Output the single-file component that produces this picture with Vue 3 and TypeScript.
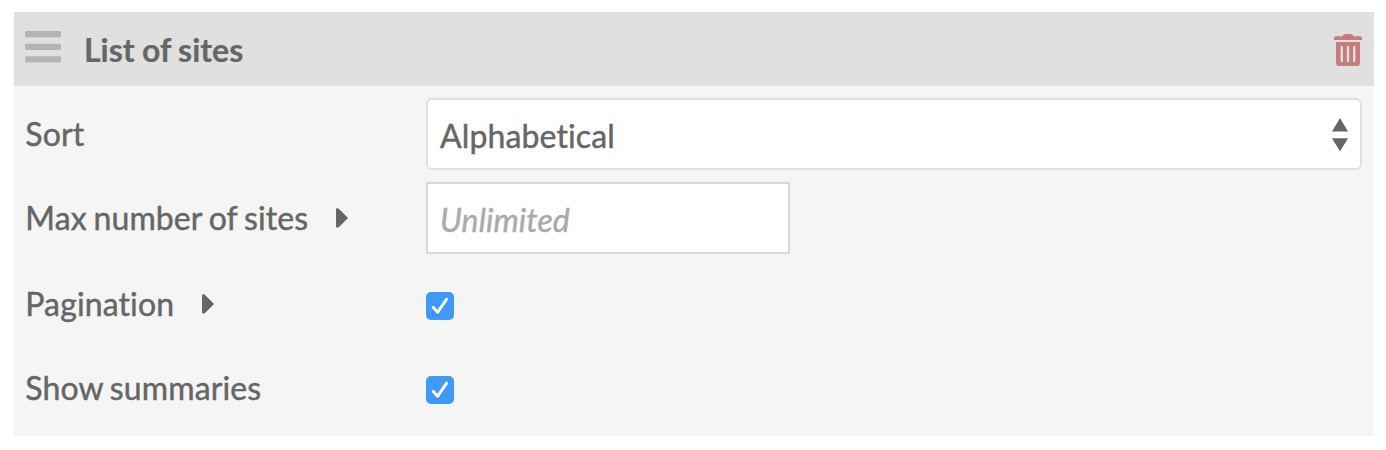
<script setup lang="ts">
import { ref } from 'vue'

interface Row {
  label: string
  kind: 'select' | 'input' | 'checkbox'
  expandable?: boolean
}

const rows: Row[] = [
  { label: 'Sort', kind: 'select' },
  { label: 'Max number of sites', kind: 'input', expandable: true },
  { label: 'Pagination', kind: 'checkbox', expandable: true },
  { label: 'Show summaries', kind: 'checkbox' },
]
const sort = ref('Alphabetical')
const placeholder = 'Unlimited'
</script>

<template>
  <section class="panel">
    <header class="header">
      <svg class="handle" width="36" height="32" viewBox="0 0 36 32">
        <rect width="36" height="6.2" rx="1.3" />
        <rect y="12.7" width="36" height="6.2" rx="1.3" />
        <rect y="25.2" width="36" height="6.2" rx="1.3" />
      </svg>
      <h2 class="title">List of sites</h2>
      <svg class="trash" width="30" height="34" viewBox="0 0 30 34">
        <path
          fill-rule="evenodd"
          d="M1 4.2Q1 2.2 3 2.2H9.5Q10.5 0 12.5 0H17.5Q19.5 0 20.5 2.2H27Q29 2.2 29 4.2V6H1ZM3 8H27V29Q27 32 24 32H6Q3 32 3 29ZM8.8 12Q7.6 12 7.6 13V27Q7.6 28 8.8 28Q10 28 10 27V13Q10 12 8.8 12ZM15 12Q13.8 12 13.8 13V27Q13.8 28 15 28Q16.2 28 16.2 27V13Q16.2 12 15 12ZM21.2 12Q20 12 20 13V27Q20 28 21.2 28Q22.4 28 22.4 27V13Q22.4 12 21.2 12Z"
        />
      </svg>
    </header>

    <div class="rows">
      <div v-for="row in rows" :key="row.label" class="row" :class="row.kind">
        <div class="label">
          <span>{{ row.label }}</span>
          <svg v-if="row.expandable" class="arrow" width="13" height="20" viewBox="0 0 13 20">
            <path d="M0 1.5Q0 0 1.4 .2Q2.3 .3 3 1L11.6 9.4Q12.2 10 11.6 10.6L3 19Q2 19.9 1 19.6Q0 19.3 0 18.5Z" />
          </svg>
        </div>
        <div v-if="row.kind === 'select'" class="field select-box">
          <span>{{ sort }}</span>
          <svg class="updown" width="16" height="34" viewBox="0 0 16 34">
            <path d="M8 0L16 13.5H0ZM0 20.2H16L8 33.5Z" />
          </svg>
        </div>
        <div v-else-if="row.kind === 'input'" class="field input-box">
          <span>{{ placeholder }}</span>
        </div>
        <svg v-else class="check" width="28" height="28" viewBox="0 0 28 28">
          <rect width="28" height="28" rx="5" fill="#3f99f8" />
          <path d="M7.5 16.5L11.8 21.8L20.8 8.4" fill="none" stroke="#2878cf" stroke-opacity=".4" stroke-width="3" stroke-linecap="round" />
          <path d="M7.3 15.5L11.6 20.3L20.5 7.4" fill="none" stroke="#fff" stroke-width="3.1" stroke-linecap="round" stroke-linejoin="round" />
        </svg>
      </div>
    </div>
  </section>
</template>

<style>
body {
  margin: 0;
  background: #fff;
}
</style>

<style scoped>
.panel {
  box-sizing: border-box;
  width: 1360px;
  height: 424px;
  margin: 12px 0 0 14px;
  background: #f5f5f5;
  color: #666;
  font: 32px/40px Lato, sans-serif;
  font-variant-ligatures: none;
  -webkit-text-stroke: 0.45px currentColor;
  display: flow-root;
}
.header {
  box-sizing: border-box;
  display: flex;
  height: 74px;
  padding: 0 11px;
  background: #e0e0e0;
}
.handle {
  margin-top: 19px;
  fill: #b4b4b4;
}
.title {
  margin: 18px auto 0 23px;
  font-size: 32px;
  font-weight: 700;
  white-space: nowrap;
  word-spacing: -0.5px;
  -webkit-text-stroke: 0.2px currentColor;
}
.trash {
  margin: 22px 0 0;
  fill: #c67c7d;
}
.rows {
  padding: 6px 12px 0 11px;
}
.row {
  display: grid;
  grid-template-columns: 401px 1fr;
  align-items: center;
  height: 84px;
}
.label {
  display: flex;
  align-items: center;
  gap: 28px;
  white-space: nowrap;
  letter-spacing: 0.12px;
  word-spacing: -1.6px;
  padding-left: 0.3px;
}
.arrow {
  margin-bottom: 1px;
  fill: #666;
}
.field {
  box-sizing: border-box;
  display: flex;
  align-items: center;
  justify-content: space-between;
  height: 72px;
  padding: 4px 12px 0;
  background: #fff;
  letter-spacing: 0.12px;
}
.select-box {
  border: 2px solid #e0e0e0;
  border-radius: 6px;
}
.updown {
  margin: -3px 0 0;
  fill: #666;
}
.input-box {
  width: 364px;
  border: 2px solid #d8d8d8;
  color: #aaa;
  font-style: italic;
}
.checkbox .label {
  padding-top: 4px;
}
.check {
  margin-top: 8px;
}
</style>
